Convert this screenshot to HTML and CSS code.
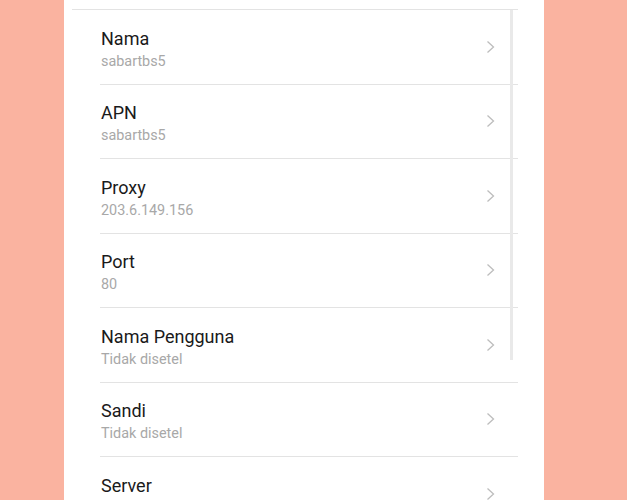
FILE: index.html
```html
<!DOCTYPE html>
<html lang="id">
<head>
<meta charset="utf-8">
<title>APN</title>
<link rel="stylesheet" href="styles.css">
</head>
<body>
<div class="panel">
  <div class="top-rule"></div>
  <div class="scrollbar"></div>
  <ul class="list">
    <li class="row"><div class="text"><div class="title">Nama</div><div class="sub">sabartbs5</div></div><svg class="chev" width="9" height="14" viewBox="0 0 9 14"><polyline points="1.5,1.5 7.5,7 1.5,12.5" fill="none" stroke="#bdbdbd" stroke-width="1.3"/></svg></li>
    <li class="row"><div class="text"><div class="title">APN</div><div class="sub">sabartbs5</div></div><svg class="chev" width="9" height="14" viewBox="0 0 9 14"><polyline points="1.5,1.5 7.5,7 1.5,12.5" fill="none" stroke="#bdbdbd" stroke-width="1.3"/></svg></li>
    <li class="row"><div class="text"><div class="title">Proxy</div><div class="sub">203.6.149.156</div></div><svg class="chev" width="9" height="14" viewBox="0 0 9 14"><polyline points="1.5,1.5 7.5,7 1.5,12.5" fill="none" stroke="#bdbdbd" stroke-width="1.3"/></svg></li>
    <li class="row"><div class="text"><div class="title">Port</div><div class="sub">80</div></div><svg class="chev" width="9" height="14" viewBox="0 0 9 14"><polyline points="1.5,1.5 7.5,7 1.5,12.5" fill="none" stroke="#bdbdbd" stroke-width="1.3"/></svg></li>
    <li class="row"><div class="text"><div class="title">Nama Pengguna</div><div class="sub">Tidak disetel</div></div><svg class="chev" width="9" height="14" viewBox="0 0 9 14"><polyline points="1.5,1.5 7.5,7 1.5,12.5" fill="none" stroke="#bdbdbd" stroke-width="1.3"/></svg></li>
    <li class="row"><div class="text"><div class="title">Sandi</div><div class="sub">Tidak disetel</div></div><svg class="chev" width="9" height="14" viewBox="0 0 9 14"><polyline points="1.5,1.5 7.5,7 1.5,12.5" fill="none" stroke="#bdbdbd" stroke-width="1.3"/></svg></li>
    <li class="row"><div class="text"><div class="title">Server</div><div class="sub">Tidak disetel</div></div><svg class="chev" width="9" height="14" viewBox="0 0 9 14"><polyline points="1.5,1.5 7.5,7 1.5,12.5" fill="none" stroke="#bdbdbd" stroke-width="1.3"/></svg></li>
  </ul>
</div>
</body>
</html>
```
FILE: styles.css
```css
html, body {
  margin: 0;
  padding: 0;
  height: 500px;
  overflow: hidden;
  background: #fab3a0;
  font-family: Roboto, "Noto Sans", sans-serif;
}
.panel {
  position: relative;
  margin-left: 64px;
  width: 480px;
  height: 500px;
  background: #ffffff;
  padding-top: 9px;
  box-sizing: border-box;
  overflow: hidden;
}
.top-rule {
  height: 1px;
  background: #e3e3e3;
  margin: 0 26px 0 8px;
}
.scrollbar {
  position: absolute;
  left: 446px;
  top: 10px;
  width: 3px;
  height: 350px;
  background: #e9e9e9;
}
.list {
  list-style: none;
  margin: 0 26px 0 36px;
  padding: 0;
}
.row {
  display: flex;
  align-items: center;
  justify-content: space-between;
  height: 74.5px;
  box-sizing: border-box;
  border-bottom: 1px solid #e3e3e3;
  padding-left: 1px;
  padding-right: 23px;
}
.text {
  margin-top: 5px;
}
.title {
  font-size: 18px;
  line-height: 22px;
  color: #1a1a1a;
  margin-bottom: 3px;
}
.sub {
  font-size: 14.4px;
  line-height: 18px;
  color: #a8a8a8;
}
.chev {
  display: block;
  flex: none;
}
```
